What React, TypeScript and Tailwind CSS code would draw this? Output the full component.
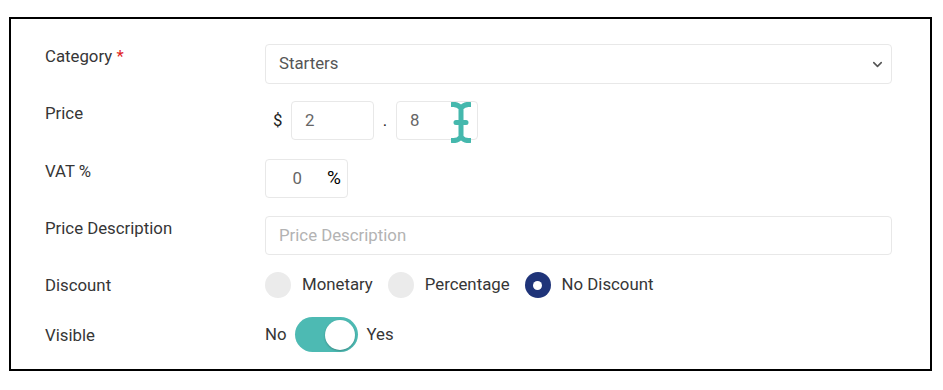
import { ChevronDown } from "lucide-react";

const font = { fontFamily: "Roboto, 'Liberation Sans', sans-serif" };

function Label({ children }: { children: React.ReactNode }) {
  return <div className="w-[220px] shrink-0 text-[16.8px] leading-6 text-[#363636]">{children}</div>;
}

function IBeam() {
  return (
    <svg className="absolute left-[-28px] top-0" width="20" height="41" viewBox="0 0 20 41" fill="none">
      <path
        d="M1 2.5 C5 2 8 3.5 10 6 C12 3.5 15 2 19 2.5 M1 38.5 C5 39 8 37.5 10 35 C12 37.5 15 39 19 38.5 M10 6 V35 M5 20.5 H15"
        stroke="#45b8ad"
        strokeWidth="5"
        strokeLinecap="round"
      />
    </svg>
  );
}

export default function App() {
  return (
    <div className="bg-white min-h-[390px] pt-[17px] pl-[9px]" style={font}>
      <div className="w-[923px] h-[354px] border-2 border-black pl-[34px] pr-[38px] pt-[25px]">
        {/* Category */}
        <div className="flex items-start h-10">
          <Label>
            Category <span className="text-[#e02424]">*</span>
          </Label>
          <div className="flex-1 h-10 flex items-center justify-between rounded border border-[#e8e8e8] pl-[13px] pr-[6px] text-[16.8px] text-[#555]">
            <span>Starters</span>
            <ChevronDown className="w-[15px] h-[15px] text-[#555]" strokeWidth={2.5} />
          </div>
        </div>

        {/* Price */}
        <div className="flex items-start h-[39px] mt-[17px]">
          <Label>Price</Label>
          <div className="flex items-center h-[39px] text-[16.8px]">
            <span className="w-[26px] pl-[8px] text-[#222]">$</span>
            <div className="w-[83px] h-[39px] rounded border border-[#e8e8e8] flex items-center pl-[13px] text-[#666]">2</div>
            <span className="w-[22px] text-center text-[#222]">.</span>
            <div className="relative w-[82px] h-[39px] rounded border border-[#e8e8e8] flex items-center pl-[13px] text-[#666]">
              8
              <div className="absolute left-[82px] top-0">
                <IBeam />
              </div>
            </div>
          </div>
        </div>

        {/* VAT */}
        <div className="flex items-start h-[39px] mt-[19px]">
          <Label>VAT %</Label>
          <div className="w-[83px] h-[39px] rounded border border-[#e8e8e8] flex items-center text-[16.8px]">
            <span className="w-[36px] text-right text-[#666]">0</span>
            <span className="ml-[25px] text-[19px] text-black">%</span>
          </div>
        </div>

        {/* Price Description */}
        <div className="flex items-start h-[39px] mt-[18px]">
          <Label>Price Description</Label>
          <div className="flex-1 h-[39px] rounded border border-[#e8e8e8] flex items-center pl-[13px] text-[16.8px] text-[#b3b3b3]">
            Price Description
          </div>
        </div>

        {/* Discount */}
        <div className="flex items-center h-[26px] mt-[17px]">
          <Label>Discount</Label>
          <div className="flex items-center text-[16.8px] text-[#363636]">
            <span className="w-[26px] h-[26px] rounded-full bg-[#ebebeb]" />
            <span className="ml-[11px] mr-[15px]">Monetary</span>
            <span className="w-[26px] h-[26px] rounded-full bg-[#ebebeb]" />
            <span className="ml-[11px] mr-[15px]">Percentage</span>
            <span className="w-[26px] h-[26px] rounded-full bg-[#1f3479] flex items-center justify-center">
              <span className="w-[9px] h-[9px] rounded-full bg-white" />
            </span>
            <span className="ml-[11px]">No Discount</span>
          </div>
        </div>

        {/* Visible */}
        <div className="flex items-center h-[35px] mt-[19px]">
          <Label>Visible</Label>
          <div className="flex items-center text-[16.8px] text-[#363636]">
            <span>No</span>
            <span className="ml-[8px] w-[63px] h-[35px] rounded-full bg-[#4dbab3] flex items-center justify-end pr-[3px]">
              <span className="w-[30px] h-[30px] rounded-full bg-white shadow-[0_1px_2px_rgba(0,0,0,0.25)]" />
            </span>
            <span className="ml-[9px]">Yes</span>
          </div>
        </div>
      </div>
    </div>
  );
}
